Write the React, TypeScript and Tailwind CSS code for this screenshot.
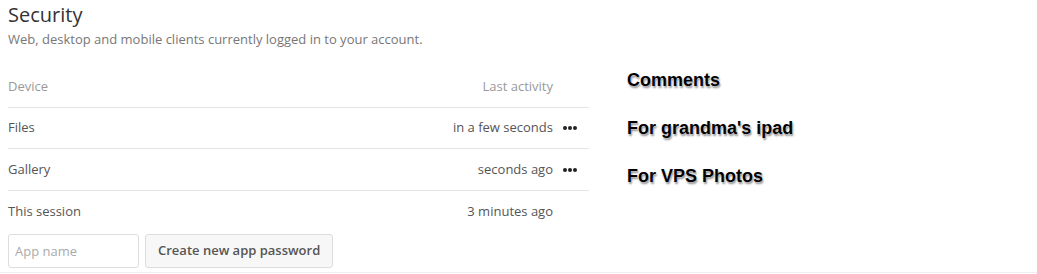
import { Fragment } from 'react';

type Session = {
  name: string;
  lastActivity: string;
  canRevoke: boolean;
};

const sessions: Session[] = [
  { name: 'Files', lastActivity: 'in a few seconds', canRevoke: true },
  { name: 'Gallery', lastActivity: 'seconds ago', canRevoke: true },
  { name: 'This session', lastActivity: '3 minutes ago', canRevoke: false },
];

const notes = ['Comments', "For grandma's ipad", 'For VPS Photos'];

function MoreDots() {
  return (
    <span className="flex items-center gap-px">
      <span className="w-[4px] h-[4px] rounded-full bg-[#222]"></span>
      <span className="w-[4px] h-[4px] rounded-full bg-[#222]"></span>
      <span className="w-[4px] h-[4px] rounded-full bg-[#222]"></span>
    </span>
  );
}

export default function App() {
  return (
    <div className="w-full h-[274px] bg-white font-['Open_Sans',sans-serif]">
      <div className="flex border-b border-[#eeeeee] pb-[4px]">
        {/* settings section */}
        <div className="w-[589px] pl-2 shrink-0">
          <h2 className="mt-[2px] text-[20px] leading-[26px] font-normal text-[#333]">Security</h2>
          <p className="mt-[2px] text-[13px] leading-[18px] text-[#777]">
            Web, desktop and mobile clients currently logged in to your account.
          </p>

          <div className="mt-[19px] grid grid-cols-[1fr_auto_36px] text-[13px]">
            <div className="h-[41px] flex items-center border-b border-[#e4e4e4] text-[#999]">Device</div>
            <div className="h-[41px] flex items-center justify-end border-b border-[#e4e4e4] text-[#999]">
              Last activity
            </div>
            <div className="h-[41px] border-b border-[#e4e4e4]"></div>

            {sessions.map((s, i) => {
              const last = i === sessions.length - 1;
              const height = i === 0 ? 'h-[41px]' : 'h-[42px]';
              const row = last ? height : `${height} border-b border-[#e4e4e4]`;
              return (
                <Fragment key={s.name}>
                  <div className={`${row} flex items-center text-[#555]`}>{s.name}</div>
                  <div className={`${row} flex items-center justify-end text-[#555]`}>{s.lastActivity}</div>
                  <div className={`${row} flex items-center pl-[10px]`}>{s.canRevoke && <MoreDots />}</div>
                </Fragment>
              );
            })}
          </div>

          <div className="mt-[1px] flex items-center gap-[6px]">
            <input
              type="text"
              placeholder="App name"
              className="w-[131px] h-[34px] px-[6px] text-[13px] text-[#555] placeholder:text-[#aaa] border border-[#ddd] rounded-[3px] outline-none"
            />
            <button className="h-[34px] px-[12px] text-[13px] font-semibold text-[#555] bg-[#f7f7f7] border border-[#ddd] rounded-[3px]">
              Create new app password
            </button>
          </div>
        </div>

        {/* annotations */}
        <div className="ml-[38px] pt-[70px] flex flex-col gap-[28px]">
          {notes.map((n) => (
            <div
              key={n}
              className="font-['Liberation_Sans',Arial,sans-serif] font-bold text-[18px] leading-[20px] text-black [text-shadow:0_0_1px_#fff,1px_2px_2px_rgba(0,0,0,0.45)]"
            >
              {n}
            </div>
          ))}
        </div>
      </div>
    </div>
  );
}
